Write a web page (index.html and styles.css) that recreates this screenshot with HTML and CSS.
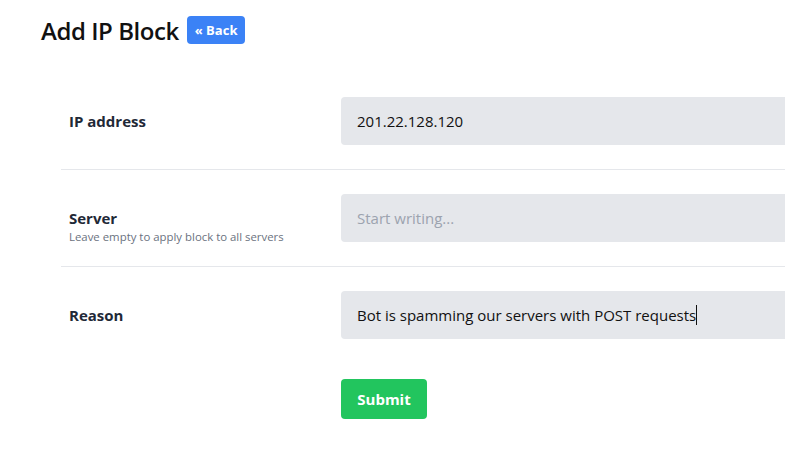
FILE: index.html
```html
<!DOCTYPE html>
<html>
<head>
<meta charset="utf-8">
<link rel="stylesheet" href="styles.css">
</head>
<body>
<div class="page">
  <div class="header">
    <h1 class="title">Add IP Block</h1>
    <a class="back">« Back</a>
  </div>
  <div class="form">
    <div class="row">
      <div class="label"><div class="label-main">IP address</div></div>
      <div class="field"><div class="input">201.22.128.120</div></div>
    </div>
    <div class="row">
      <div class="label"><div class="label-main">Server</div><div class="label-sub">Leave empty to apply block to all servers</div></div>
      <div class="field"><div class="input placeholder">Start writing...</div></div>
    </div>
    <div class="row last">
      <div class="label"><div class="label-main">Reason</div></div>
      <div class="field"><div class="input">Bot is spamming our servers with POST requests<span class="caret"></span></div></div>
    </div>
    <div class="actions">
      <div class="spacer"></div>
      <button class="submit">Submit</button>
    </div>
  </div>
</div>
</body>
</html>
```
FILE: styles.css
```css
html, body { margin: 0; padding: 0; background: #fff; overflow: hidden; }
body { font-family: "Open Sans", "Noto Sans", sans-serif; color: #111827; }
.page { padding: 14px 0 0 41px; width: 1100px; }
.header { display: flex; align-items: center; gap: 8px; height: 32px; }
.title { margin: 0; font-size: 24px; font-weight: 600; color: #111; letter-spacing: -0.45px; }
.back { background: #3b82f6; color: #fff; font-weight: 700; font-size: 13px; padding: 0 8px; height: 28px; display: flex; align-items: center; border-radius: 4px; }
.form { margin: 27px 0 0 20px; }
.row { display: grid; grid-template-columns: 280px 1fr; padding: 24px 0; border-bottom: 1px solid #e5e7eb; }
.row.last { border-bottom: none; }
.label { height: 48px; box-sizing: border-box; padding: 14px 0 0 8px; display: flex; flex-direction: column; }
.label-main { font-size: 15px; line-height: 20px; font-weight: 700; color: #1f2937; }
.label-sub { font-size: 11.4px; line-height: 16px; color: #6b7280; margin-top: 1px; }
.input { height: 48px; box-sizing: border-box; background: #e5e7eb; border-radius: 4px; padding: 0 16px; display: flex; align-items: center; font-size: 15px; color: #111; }
.input.placeholder { color: #9ca3af; }
.caret { display: inline-block; width: 1px; height: 20px; background: #111; }
.actions { display: grid; grid-template-columns: 280px 1fr; margin-top: 16px; }
.submit { justify-self: start; background: #22c55e; color: #fff; font-family: inherit; font-weight: 700; font-size: 15px; border: none; border-radius: 4px; width: 86px; height: 40px; }
```
